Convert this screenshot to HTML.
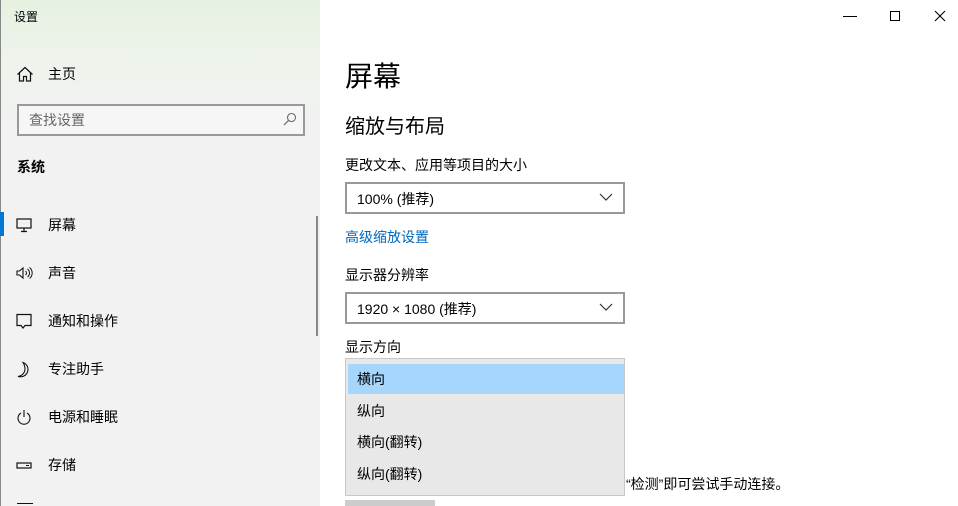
<!DOCTYPE html>
<html><head><meta charset="utf-8"><style>
*{margin:0;padding:0;box-sizing:border-box}
body{width:958px;height:506px;overflow:hidden;background:#fff;font-family:"Liberation Sans","Noto Sans CJK SC",sans-serif;color:#000;position:relative}
.side{position:absolute;left:0;top:0;width:320px;height:506px;background:linear-gradient(180deg,#e6f1e1 0px,#eef3ec 60px,#f2f2f2 140px,#f2f2f2 100%)}
.edge{position:absolute;left:0;top:0;width:1px;height:506px;background:#888}
.t{position:absolute;white-space:nowrap}
.nav{position:absolute;left:16px;font-size:14px}
.nav svg{position:absolute;left:0;top:-8px}
.nav span{position:absolute;left:32px;top:-10px;white-space:nowrap}
.dd{position:absolute;left:345px;width:280px;height:32px;border:2px solid #999;font-size:14px;padding:5px 10px}
.dd svg{position:absolute;right:10px;top:9px}
</style></head><body>
<div class="side">
<div class="edge"></div>
<div class="t" style="left:14px;top:8px;font-size:12px">设置</div>
<div class="nav" style="top:74px"><svg width="18" height="16" viewBox="0 0 18 16"><path d="M1.5 8.5L9 1.5l7.5 7M3.5 6.8V15h4v-4.5h3V15h4V6.8" fill="none" stroke="#111" stroke-width="1.2"/></svg><span>主页</span></div>
<div style="position:absolute;left:17px;top:104px;width:288px;height:32px;border:2px solid #999;background:#f6f6f6"></div>
<div class="t" style="left:29px;top:110px;font-size:14px;color:#666">查找设置</div>
<svg style="position:absolute;left:283px;top:112px" width="14" height="14" viewBox="0 0 14 14"><circle cx="8.5" cy="5.5" r="4" fill="none" stroke="#666" stroke-width="1.1"/><path d="M5.5 8.5L1 13" stroke="#666" stroke-width="1.2"/></svg>
<div class="t" style="left:17px;top:157px;font-size:14px;font-weight:bold">系统</div>
<div style="position:absolute;left:0;top:212px;width:4px;height:24px;background:#0078d7"></div>
<div class="nav" style="top:225px"><svg width="18" height="16" viewBox="0 0 18 16"><rect x="1" y="2" width="14" height="9" fill="none" stroke="#111" stroke-width="1.2"/><path d="M8 11v3M5 14.5h6" stroke="#111" stroke-width="1.2"/></svg><span>屏幕</span></div>
<div class="nav" style="top:273px"><svg width="18" height="16" viewBox="0 0 18 16"><path d="M1 6h2.5L7 3v10L3.5 10H1z" fill="none" stroke="#111" stroke-width="1.1"/><path d="M9.5 6a2.5 2.5 0 0 1 0 4M11.5 4a5 5 0 0 1 0 8M13.5 2.5a7 7 0 0 1 0 11" fill="none" stroke="#111" stroke-width="1"/></svg><span>声音</span></div>
<div class="nav" style="top:321px"><svg width="18" height="18" viewBox="0 0 18 18"><path d="M1 1.5h14v11H9l-2 2.5-2-2.5H1z" fill="none" stroke="#111" stroke-width="1.2"/></svg><span>通知和操作</span></div>
<div class="nav" style="top:369px"><svg width="18" height="18" viewBox="0 0 18 18"><path d="M7 1.5C11 3 13 7 11.5 11S6 16.5 2 15.5C6 15 9 11.5 9 8S8 3 7 1.5z" fill="none" stroke="#111" stroke-width="1.1"/></svg><span>专注助手</span></div>
<div class="nav" style="top:417px"><svg width="18" height="18" viewBox="0 0 18 18"><path d="M5 4a6 6 0 1 0 6 0" fill="none" stroke="#111" stroke-width="1.1"/><path d="M8 1v7" stroke="#111" stroke-width="1.1"/></svg><span>电源和睡眠</span></div>
<div class="nav" style="top:465px"><svg width="18" height="16" viewBox="0 0 18 16"><rect x="1" y="6" width="14" height="5" fill="none" stroke="#111" stroke-width="1.2"/><path d="M10 8.5h3" stroke="#111" stroke-width="1"/></svg><span>存储</span></div>
<div style="position:absolute;left:17px;top:503px;width:16px;height:3px;border-top:1.5px solid #111"></div>
<div style="position:absolute;left:316px;top:216px;width:2px;height:120px;background:#888"></div>
</div>
<div class="t" style="left:843px;top:16px;width:14px;height:1px;background:#000"></div>
<div class="t" style="left:890px;top:11px;width:10px;height:10px;border:1px solid #000"></div>
<svg style="position:absolute;left:934px;top:10px" width="12" height="12" viewBox="0 0 12 12"><path d="M1 1l10 10M11 1L1 11" stroke="#000" stroke-width="1.1"/></svg>
<div class="t" style="left:345px;top:55px;font-size:28px">屏幕</div>
<div class="t" style="left:345px;top:110px;font-size:20px">缩放与布局</div>
<div class="t" style="left:345px;top:155px;font-size:14px">更改文本、应用等项目的大小</div>
<div class="dd" style="top:182px">100% (推荐)<svg width="14" height="8" viewBox="0 0 14 8"><path d="M1 1l6 6 6-6" fill="none" stroke="#333" stroke-width="1.2"/></svg></div>
<div class="t" style="left:345px;top:227px;font-size:14px;color:#0067c0">高级缩放设置</div>
<div class="t" style="left:345px;top:265px;font-size:14px">显示器分辨率</div>
<div class="dd" style="top:292px">1920 × 1080 (推荐)<svg width="14" height="8" viewBox="0 0 14 8"><path d="M1 1l6 6 6-6" fill="none" stroke="#333" stroke-width="1.2"/></svg></div>
<div class="t" style="left:345px;top:337px;font-size:14px">显示方向</div>
<div class="t" style="left:626px;top:474px;font-size:14px">“检测”即可尝试手动连接。</div>
<div class="t" style="left:345px;top:500px;width:90px;height:6px;background:#ccc"></div>
<div style="position:absolute;left:345px;top:358px;width:280px;height:138px;background:#e8e8e8;border:1px solid #c8c8c8;font-size:14px">
<div style="position:absolute;left:2px;top:5px;width:276px;height:30px;background:#a6d6fb"></div>
<div class="t" style="left:11px;top:10px">横向</div>
<div class="t" style="left:11px;top:42px">纵向</div>
<div class="t" style="left:11px;top:73px">横向(翻转)</div>
<div class="t" style="left:11px;top:105px">纵向(翻转)</div>
</div>
</body></html>
